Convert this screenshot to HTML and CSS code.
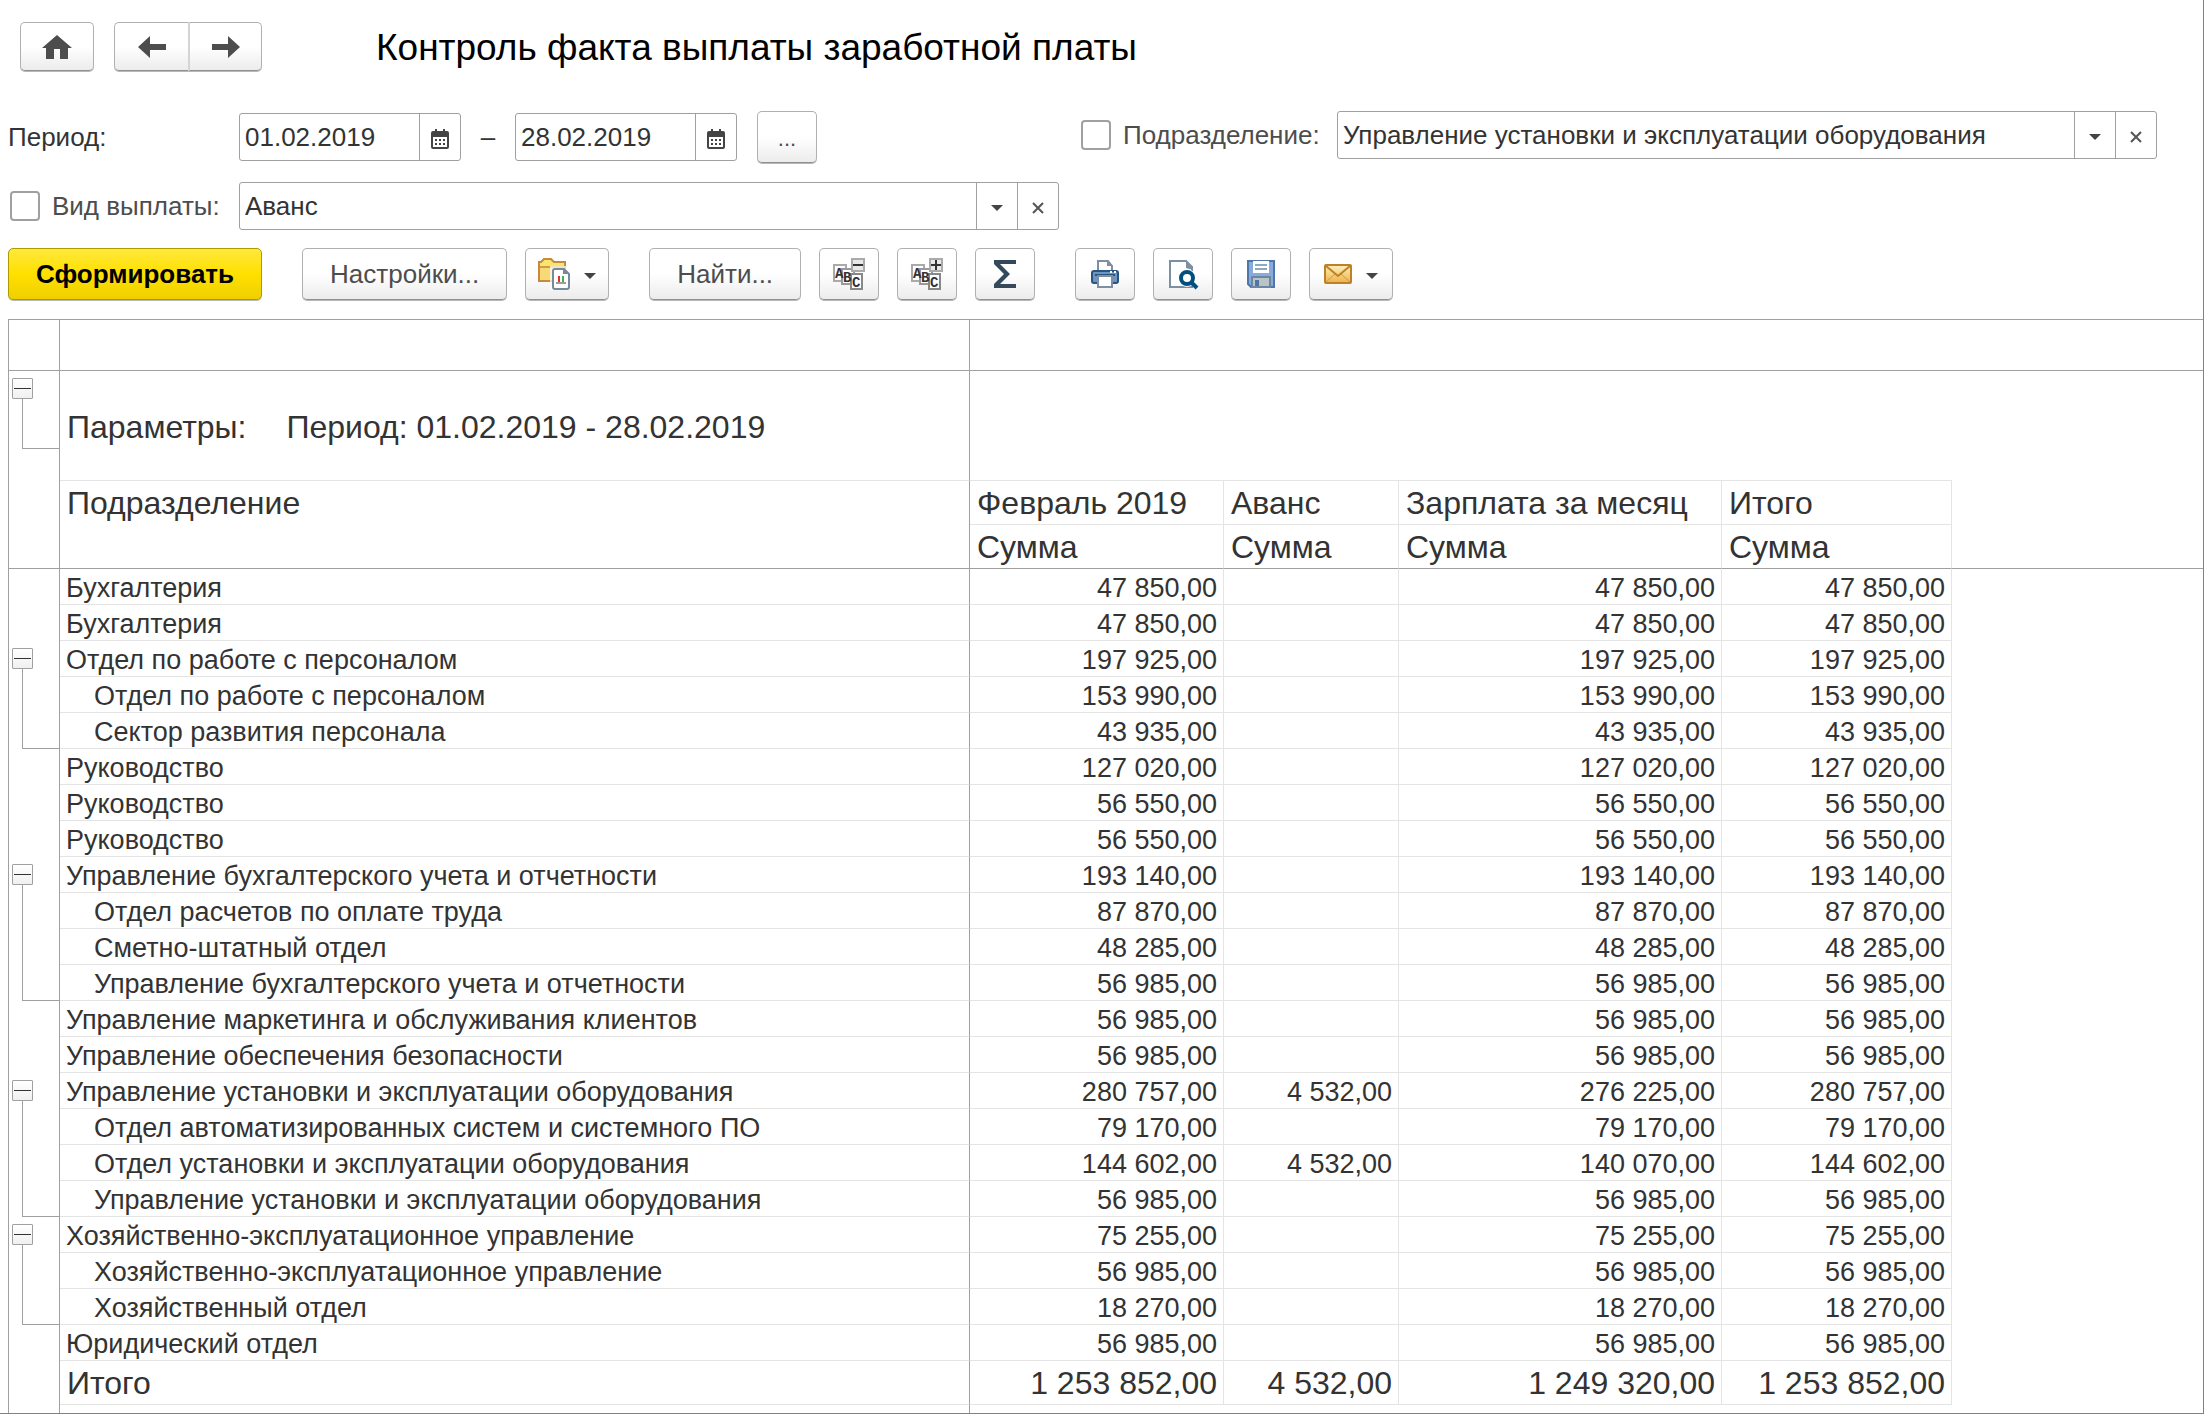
FILE: index.html
```html
<!DOCTYPE html>
<html lang="ru">
<head>
<meta charset="utf-8">
<title>Контроль факта выплаты заработной платы</title>
<link rel="stylesheet" href="styles.css">
</head>
<body>
<svg class="sprite" aria-hidden="true">
  <symbol id="calendar" viewBox="0 0 18 20"><path fill="#444" d="M2 2h2V0h2v2h6V0h2v2h2q2 0 2 2v14q0 2-2 2H2q-2 0-2-2V4q0-2 2-2z"/><path fill="#fff" d="M2 8h14v10H2z"/><path fill="#444" d="M4 10h2v2H4zM8 10h2v2H8zM12 10h2v2h-2zM4 14h2v2H4zM8 14h2v2H8zM12 14h2v2h-2z"/></symbol>
  <symbol id="caret" viewBox="0 0 12 6"><path fill="#444" d="M0 0h12L6 6z"/></symbol>
  <symbol id="cross" viewBox="0 0 12 12"><path stroke="#555" stroke-width="2" d="M1 1l10 10M11 1L1 11"/></symbol>
</svg>
<main class="page">
  <header class="head">
    <button class="btn nav" type="button" aria-label="Домой"><svg width="30" height="24" viewBox="0 0 30 24"><path fill="#4d4d4d" d="M15 0l15 13h-4v11h-8V14h-6v10H4V13H0z"/></svg></button>
    <div class="pair">
      <button class="btn nav" type="button" aria-label="Назад"><svg width="28" height="22" viewBox="0 0 28 22"><path fill="#4d4d4d" d="M0 11L12 0v8h16v6H12v8z"/></svg></button>
      <button class="btn nav" type="button" aria-label="Вперёд"><svg width="28" height="22" viewBox="0 0 28 22"><path fill="#4d4d4d" d="M28 11L16 0v8H0v6h16v8z"/></svg></button>
    </div>
    <h1 class="title">Контроль факта выплаты заработной платы</h1>
  </header>

  <form class="filters">
    <div class="line">
      <label class="name strong" for="from">Период:</label>
      <div class="field date"><input id="from" type="text" value="01.02.2019"><button type="button" aria-label="Выбрать дату начала"><svg width="18" height="20"><use href="#calendar"/></svg></button></div>
      <span class="dash">–</span>
      <div class="field date"><input type="text" value="28.02.2019" aria-label="Конец периода"><button type="button" aria-label="Выбрать дату конца"><svg width="18" height="20"><use href="#calendar"/></svg></button></div>
      <button class="btn dots" type="button">...</button>
    </div>
    <div class="line top">
      <div class="name wide"><input class="check" type="checkbox" id="dep-on"><label for="dep-on">Подразделение:</label></div>
      <div class="field combo"><input type="text" value="Управление установки и эксплуатации оборудования" aria-label="Подразделение"><button type="button" aria-label="Выбрать"><svg width="12" height="6"><use href="#caret"/></svg></button><button type="button" aria-label="Очистить"><svg width="12" height="12"><use href="#cross"/></svg></button></div>
    </div>
    <div class="line">
      <div class="name"><input class="check" type="checkbox" id="kind-on"><label for="kind-on">Вид выплаты:</label></div>
      <div class="field combo"><input type="text" value="Аванс" aria-label="Вид выплаты"><button type="button" aria-label="Выбрать"><svg width="12" height="6"><use href="#caret"/></svg></button><button type="button" aria-label="Очистить"><svg width="12" height="12"><use href="#cross"/></svg></button></div>
    </div>
  </form>

  <div class="toolbar">
    <button class="btn primary" type="button">Сформировать</button>
    <div class="group">
      <button class="btn" type="button">Настройки...</button>
      <button class="btn menu" type="button" aria-label="Варианты отчета">
        <svg width="32" height="32" viewBox="0 0 32 32"><path fill="#f8d978" stroke="#c58a3c" stroke-width="2" d="M1 23V4h2l3-3h7l3 3h11v19z"/><path fill="#fde56a" d="M2 5h2l3-3h5l3 3h11v3H2z"/><path stroke="#d09b48" stroke-width="2" d="M2 9h24"/><path fill="#fff" d="M12 8h20v24H12z" opacity=".7"/><path fill="#fff" stroke="#768a98" stroke-width="2" d="M17 11h9l5 5v13q0 2-2 2H17q-2 0-2-2V13q0-2 2-2z"/><path fill="#768a98" d="M25 10l6 6h-6z"/><path fill="#e03030" d="M20 18h2v6h-2z"/><path fill="#40b050" d="M24 18h2v6h-2z"/><path fill="#a99" d="M18 24h10v2H18z"/></svg>
        <svg class="caret" width="12" height="6"><use href="#caret"/></svg>
      </button>
    </div>
    <div class="group">
      <button class="btn" type="button">Найти...</button>
      <button class="btn square" type="button" aria-label="Свернуть группы"><svg width="32" height="32" viewBox="0 0 32 32"><g fill="#fff" stroke="#aaa" stroke-width="2"><path d="M1 7h12v16H1z"/><path stroke="#999" d="M9 11h12v15H9z"/><path stroke="#888" d="M18 16h11v15H18z"/><path fill="#e9e9e9" d="M19 1h12v12H19z"/></g><g class="abc"><text x="2" y="20">A</text><text x="10" y="24">B</text><text x="19" y="29">C</text></g><path fill="#333" d="M20 6h10v2H20z"/></svg></button>
      <button class="btn square" type="button" aria-label="Развернуть группы"><svg width="32" height="32" viewBox="0 0 32 32"><g fill="#fff" stroke="#aaa" stroke-width="2"><path d="M1 7h12v16H1z"/><path stroke="#999" d="M9 11h12v15H9z"/><path stroke="#888" d="M18 16h11v15H18z"/><path fill="#e9e9e9" d="M19 1h12v12H19z"/></g><g class="abc"><text x="2" y="20">A</text><text x="10" y="24">B</text><text x="19" y="29">C</text></g><path fill="#333" d="M20 6h10v2H20zM24 2h2v10h-2z"/></svg></button>
      <button class="btn square" type="button" aria-label="Сумма"><svg width="22" height="28" viewBox="0 0 22 28"><path fill="#344a5c" d="M0 0h22v4H6l10 10L6 24h16v4H0v-4l10-10L0 4z"/></svg></button>
    </div>
    <div class="group">
      <button class="btn square" type="button" aria-label="Печать"><svg width="28" height="28" viewBox="0 0 28 28"><path fill="#fff" stroke="#7f8fa3" stroke-width="2" d="M7 12V1h10l4 5v6"/><path fill="#7f8fa3" d="M16 0l6 6h-6z"/><rect x="1" y="11" width="26" height="12" rx="2" fill="#6f94c0" stroke="#29547f" stroke-width="2"/><path fill="#29547f" d="M4 14h20v2H4z"/><path fill="#fff" d="M19 11h2v2h-2zM23 11h2v2h-2z"/><path fill="#fff" stroke="#7f8fa3" stroke-width="2" d="M7 16h14v11H7z"/></svg></button>
      <button class="btn square" type="button" aria-label="Просмотр"><svg width="28" height="28" viewBox="0 0 28 28"><path fill="#fff" stroke="#7f8fa3" stroke-width="2" d="M1 1h16l6 6v20H1z"/><path fill="#7f8fa3" d="M17 0l7 8v2l-7-2z"/><circle cx="18" cy="18" r="9" fill="#fff"/><circle cx="18" cy="18" r="6" fill="#fff" stroke="#004f7f" stroke-width="4"/><path stroke="#004f7f" stroke-width="4" d="M22 22l6 6"/></svg></button>
      <button class="btn square" type="button" aria-label="Сохранить"><svg width="28" height="28" viewBox="0 0 28 28"><path fill="#86acdd" stroke="#5075a8" stroke-width="2" d="M1 1h26v26H4l-3-3z"/><path fill="#fff" d="M6 1h16v12H6z"/><path fill="#8fa8c6" d="M8 4h12v2H8zM8 8h12v2H8z"/><path fill="#b9c4c4" stroke="#6d86a4" stroke-width="2" d="M5 27V17h18v10z"/><path fill="#5075a8" d="M8 20h4v6H8z"/></svg></button>
      <button class="btn menu" type="button" aria-label="Отправить по почте">
        <svg width="28" height="20" viewBox="0 0 28 20"><defs><linearGradient id="mail" x2="0" y2="1"><stop stop-color="#fff0bd"/><stop offset="1" stop-color="#ebb247"/></linearGradient></defs><rect x="1" y="1" width="26" height="18" rx="1" fill="url(#mail)" stroke="#bf8127" stroke-width="2"/><path fill="none" stroke="#cf9a45" stroke-width="1" d="M2 18l9-8M26 18l-9-8"/><path fill="none" stroke="#bf8127" stroke-width="2" d="M2 2l12 10L26 2"/></svg>
        <svg class="caret" width="12" height="6"><use href="#caret"/></svg>
      </button>
    </div>
  </div>

  <table class="sheet">
    <colgroup><col class="c-tree"><col class="c-name"><col class="c-month"><col class="c-adv"><col class="c-pay"><col class="c-total"><col></colgroup>
    <thead>
      <tr class="ruler"><td class="tree"></td><td class="dep"></td><td colspan="5"></td></tr>
      <tr class="params"><td class="tree open"><button type="button" aria-label="Свернуть параметры"></button><i class="stem end"></i></td><td class="dep"><span>Параметры:</span><span>Период: 01.02.2019 - 28.02.2019</span></td><td colspan="4"></td><td class="rest"></td></tr>
      <tr><td class="tree" rowspan="2"></td><th class="dep" rowspan="2" scope="col">Подразделение</th><th scope="col">Февраль 2019</th><th scope="col">Аванс</th><th scope="col">Зарплата за месяц</th><th scope="col">Итого</th><td class="rest"></td></tr>
      <tr class="sub"><th scope="col">Сумма</th><th scope="col">Сумма</th><th scope="col">Сумма</th><th scope="col">Сумма</th><td class="rest"></td></tr>
    </thead>
    <tbody>
      <tr><td class="tree"></td><td class="dep">Бухгалтерия</td><td>47 850,00</td><td></td><td>47 850,00</td><td>47 850,00</td><td class="rest"></td></tr>
      <tr><td class="tree"></td><td class="dep">Бухгалтерия</td><td>47 850,00</td><td></td><td>47 850,00</td><td>47 850,00</td><td class="rest"></td></tr>
      <tr><td class="tree open"><button type="button" aria-label="Свернуть"></button><i class="stem"></i></td><td class="dep">Отдел по работе с персоналом</td><td>197 925,00</td><td></td><td>197 925,00</td><td>197 925,00</td><td class="rest"></td></tr>
      <tr><td class="tree"><i class="stem"></i></td><td class="dep inner">Отдел по работе с персоналом</td><td>153 990,00</td><td></td><td>153 990,00</td><td>153 990,00</td><td class="rest"></td></tr>
      <tr><td class="tree"><i class="stem end"></i></td><td class="dep inner">Сектор развития персонала</td><td>43 935,00</td><td></td><td>43 935,00</td><td>43 935,00</td><td class="rest"></td></tr>
      <tr><td class="tree"></td><td class="dep">Руководство</td><td>127 020,00</td><td></td><td>127 020,00</td><td>127 020,00</td><td class="rest"></td></tr>
      <tr><td class="tree"></td><td class="dep">Руководство</td><td>56 550,00</td><td></td><td>56 550,00</td><td>56 550,00</td><td class="rest"></td></tr>
      <tr><td class="tree"></td><td class="dep">Руководство</td><td>56 550,00</td><td></td><td>56 550,00</td><td>56 550,00</td><td class="rest"></td></tr>
      <tr><td class="tree open"><button type="button" aria-label="Свернуть"></button><i class="stem"></i></td><td class="dep">Управление бухгалтерского учета и отчетности</td><td>193 140,00</td><td></td><td>193 140,00</td><td>193 140,00</td><td class="rest"></td></tr>
      <tr><td class="tree"><i class="stem"></i></td><td class="dep inner">Отдел расчетов по оплате труда</td><td>87 870,00</td><td></td><td>87 870,00</td><td>87 870,00</td><td class="rest"></td></tr>
      <tr><td class="tree"><i class="stem"></i></td><td class="dep inner">Сметно-штатный отдел</td><td>48 285,00</td><td></td><td>48 285,00</td><td>48 285,00</td><td class="rest"></td></tr>
      <tr><td class="tree"><i class="stem end"></i></td><td class="dep inner">Управление бухгалтерского учета и отчетности</td><td>56 985,00</td><td></td><td>56 985,00</td><td>56 985,00</td><td class="rest"></td></tr>
      <tr><td class="tree"></td><td class="dep">Управление маркетинга и обслуживания клиентов</td><td>56 985,00</td><td></td><td>56 985,00</td><td>56 985,00</td><td class="rest"></td></tr>
      <tr><td class="tree"></td><td class="dep">Управление обеспечения безопасности</td><td>56 985,00</td><td></td><td>56 985,00</td><td>56 985,00</td><td class="rest"></td></tr>
      <tr><td class="tree open"><button type="button" aria-label="Свернуть"></button><i class="stem"></i></td><td class="dep">Управление установки и эксплуатации оборудования</td><td>280 757,00</td><td>4 532,00</td><td>276 225,00</td><td>280 757,00</td><td class="rest"></td></tr>
      <tr><td class="tree"><i class="stem"></i></td><td class="dep inner">Отдел автоматизированных систем и системного ПО</td><td>79 170,00</td><td></td><td>79 170,00</td><td>79 170,00</td><td class="rest"></td></tr>
      <tr><td class="tree"><i class="stem"></i></td><td class="dep inner">Отдел установки и эксплуатации оборудования</td><td>144 602,00</td><td>4 532,00</td><td>140 070,00</td><td>144 602,00</td><td class="rest"></td></tr>
      <tr><td class="tree"><i class="stem end"></i></td><td class="dep inner">Управление установки и эксплуатации оборудования</td><td>56 985,00</td><td></td><td>56 985,00</td><td>56 985,00</td><td class="rest"></td></tr>
      <tr><td class="tree open"><button type="button" aria-label="Свернуть"></button><i class="stem"></i></td><td class="dep">Хозяйственно-эксплуатационное управление</td><td>75 255,00</td><td></td><td>75 255,00</td><td>75 255,00</td><td class="rest"></td></tr>
      <tr><td class="tree"><i class="stem"></i></td><td class="dep inner">Хозяйственно-эксплуатационное управление</td><td>56 985,00</td><td></td><td>56 985,00</td><td>56 985,00</td><td class="rest"></td></tr>
      <tr><td class="tree"><i class="stem end"></i></td><td class="dep inner">Хозяйственный отдел</td><td>18 270,00</td><td></td><td>18 270,00</td><td>18 270,00</td><td class="rest"></td></tr>
      <tr><td class="tree"></td><td class="dep">Юридический отдел</td><td>56 985,00</td><td></td><td>56 985,00</td><td>56 985,00</td><td class="rest"></td></tr>
    </tbody>
    <tfoot>
      <tr><td class="tree"></td><th class="dep" scope="row">Итого</th><td>1 253 852,00</td><td>4 532,00</td><td>1 249 320,00</td><td>1 253 852,00</td><td class="rest"></td></tr>
      <tr class="tail"><td class="tree"></td><td class="dep"></td><td colspan="5"></td></tr>
    </tfoot>
  </table>
</main>
</body>
</html>
```
FILE: styles.css
```css
* { box-sizing: border-box; }

body {
  margin: 0;
  background: #fff;
  color: #333;
  font: 26px/30px "Liberation Sans", Arial, sans-serif;
}

button, input { font: inherit; color: inherit; margin: 0; }

.sprite { display: none; }

.page {
  display: flex;
  flex-direction: column;
  min-height: 100vh;
  padding: 22px 0 0 8px;
  border-right: 1px solid #808080;
  border-bottom: 1px solid #808080;
}

/* Buttons */
.btn {
  display: flex;
  align-items: center;
  justify-content: center;
  height: 52px;
  padding: 0 27px;
  border: 1px solid #b0b0b0;
  border-bottom-color: #909090;
  border-radius: 5px;
  background: linear-gradient(#fff 50%, #ececec);
  box-shadow: 0 1px #b8b8b8;
  color: #4d4d4d;
  white-space: nowrap;
}
.btn svg { overflow: visible; }
.btn.square, .btn.dots { width: 60px; padding: 0; }
.btn.menu { width: 84px; padding: 0; gap: 14px; }
.btn.nav { width: 74px; height: 49px; padding: 0; }
.btn.primary {
  border-color: #b09a00;
  background: linear-gradient(#ffe83c, #ffe000 50%, #efcf00);
  color: #000;
  font-weight: bold;
}
.btn.dots { padding-top: 4px; }
.btn .caret { margin-top: 4px; }

/* Heading */
.head { display: flex; align-items: center; height: 49px; padding-left: 12px; }
.pair { display: flex; margin-left: 20px; }
.pair .btn:first-child { border-radius: 5px 0 0 5px; border-right: 0; }
.pair .btn:last-child { border-radius: 0 5px 5px 0; border-left: 2px solid #d4d4d4; }
.title { margin: 0 0 0 114px; padding-top: 3px; color: #000; font-size: 37px; line-height: 42px; font-weight: normal; }

/* Filters */
.filters {
  display: grid;
  grid-template-columns: auto auto;
  justify-content: start;
  gap: 19px 22px;
  margin-top: 40px;
}
.line { display: flex; align-items: center; }
.line.top { align-items: flex-start; }
.name { display: flex; align-items: center; gap: 12px; width: 231px; height: 48px; color: #4d4d4d; }
.name.wide { width: 256px; }
.name.strong { color: #333; }
.name:not(.wide):not(.strong) { padding-left: 2px; }
.check {
  appearance: none;
  width: 30px;
  height: 30px;
  border: 2px solid #a0a0a0;
  border-radius: 4px;
  background: #fff;
}
.field {
  display: flex;
  height: 48px;
  border: 1px solid #a0a0a0;
  border-radius: 3px;
  background: #fff;
}
.field input { flex: 1; min-width: 0; padding: 0 5px; border: 0; background: none; outline: 0; }
.field button {
  display: flex;
  align-items: center;
  justify-content: center;
  width: 41px;
  padding: 3px 0 0;
  border: 0;
  border-left: 1px solid #a0a0a0;
  background: none;
}
.field.date { width: 222px; }
.field.combo { width: 820px; }
.dash { width: 54px; text-align: center; }
.dots { margin-left: 20px; font-size: 22px; }

/* Toolbar */
.toolbar { display: flex; gap: 40px; margin: 18px 0 19px; }
.group { display: flex; gap: 18px; }
.abc { fill: #333; font: bold 14px "Liberation Mono", monospace; }

/* Report sheet */
.sheet {
  width: 100%;
  table-layout: fixed;
  border-collapse: separate;
  border-spacing: 0;
  border-top: 1px solid #a0a0a0;
  border-left: 1px solid #a0a0a0;
  font-size: 27px;
}
.c-tree { width: 51px; }
.c-name { width: 910px; }
.c-month { width: 254px; }
.c-adv { width: 175px; }
.c-pay { width: 323px; }
.c-total { width: 230px; }

.sheet td, .sheet th {
  height: 36px;
  padding: 3px 6px 0;
  border: 0 solid #e4e4e4;
  border-width: 0 1px 1px 0;
  font-weight: normal;
  line-height: 32px;
  text-align: right;
  vertical-align: top;
  white-space: nowrap;
}
.sheet th, .sheet tfoot td { height: 44px; padding-top: 1px; font-size: 32px; line-height: 42px; }
.sheet th { padding-left: 7px; text-align: left; }
.sheet .dep { border-right-color: #a0a0a0; text-align: left; }
.sheet .inner { padding-left: 34px; }
.sheet .rest { border-width: 0; }

.sheet .ruler td { height: 51px; border-bottom-color: #a0a0a0; }
.sheet .ruler td:last-child, .sheet .tail td:last-child { border-right-width: 0; }
.sheet .params td { height: 110px; border-right-width: 0; }
.sheet .params .dep { padding: 35px 7px 0; border-right-width: 1px; font-size: 32px; line-height: 42px; }
.params span + span { margin-left: 40px; }
.sheet .sub th, .sheet thead th[rowspan] { border-bottom-color: #a0a0a0; }
.sheet .sub .rest { border-bottom: 1px solid #a0a0a0; }

/* Grouping tree */
.sheet td.tree { padding: 0; border-right: 1px solid #a0a0a0; border-bottom-width: 0; }
.sheet .ruler td.tree, .sheet td.tree[rowspan] { border-bottom: 1px solid #a0a0a0; }
.tree button {
  display: block;
  width: 21px;
  height: 21px;
  margin: 7px 0 0 3px;
  padding: 0;
  border: 1px solid #a0a0a0;
  border-radius: 1px;
  background: linear-gradient(#333, #333) center / 17px 1px no-repeat, linear-gradient(#fff, #f0f0f0);
}
.stem { display: block; height: 36px; margin-left: 13px; border-left: 1px solid #a0a0a0; }
.stem.end { border-bottom: 1px solid #a0a0a0; }
.open .stem { height: 8px; }
.params .open .stem { height: 50px; }

.sheet .tail td { height: 8px; padding: 0; border-bottom-width: 0; line-height: 0; }
```
